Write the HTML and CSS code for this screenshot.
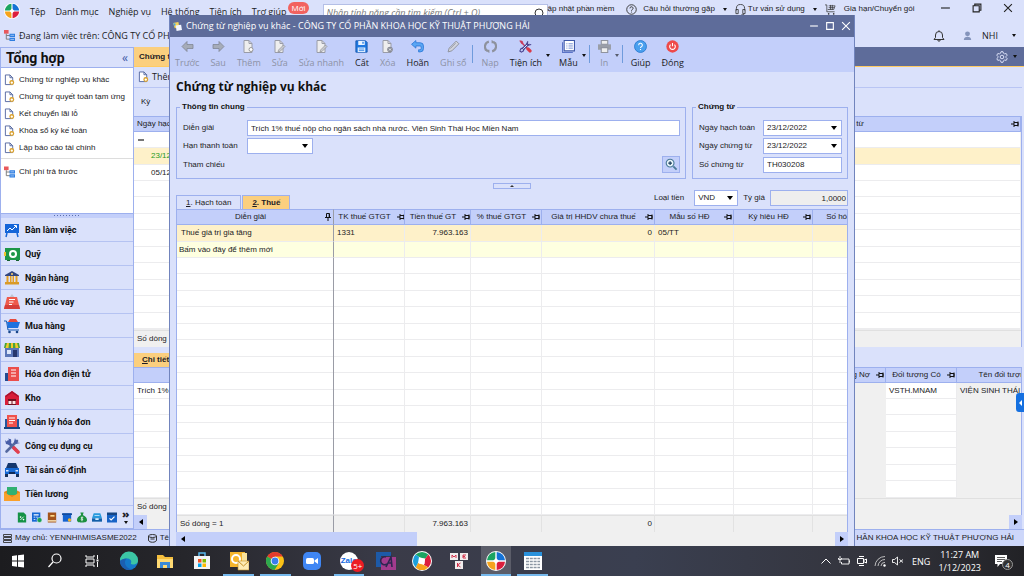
FILE: index.html
```html
<!DOCTYPE html>
<html lang="vi">
<head>
<meta charset="utf-8">
<title>Chứng từ nghiệp vụ khác</title>
<link rel="stylesheet" href="styles.css">
</head>
<body>
<svg class="defs" aria-hidden="true">
  <symbol id="pin" viewBox="0 0 8 8"><path d="M0 4h3M3 1v6M3 2.500h4v3H3M7 1.500v5" fill="none" stroke="#111" stroke-width="1"/></symbol>
  <symbol id="pin-down" viewBox="0 0 8 8"><path d="M2.500 0.500h3v4h-3zM1 4.500h6M4 5v3M5.200 1v3" fill="none" stroke="#111" stroke-width="1"/></symbol>
  <symbol id="doc" viewBox="0 0 12 12"><path d="M1.500 .5h5l3 3v7.500h-8z" fill="#fff" stroke="#51659f"/><path d="M6.500 .5v3h3" fill="none" stroke="#51659f"/><circle cx="8.500" cy="8.800" r="2" fill="#fff" stroke="#dca22c" stroke-width="1.400"/></symbol>
  <symbol id="tree" viewBox="0 0 12 12"><path d="M0 0h5v4H0z" fill="#e8585c"/><path d="M2.500 4v6h4M2.500 6h4" fill="none" stroke="#777" stroke-width="1"/><path d="M6 4h6v3.500H6zM6 8.500h6V12H6z" fill="#2f7ee0"/><path d="M7 5.800h4M7 10.300h4" stroke="#cfe2ff" stroke-width=".7"/></symbol>
  <symbol id="arrow" viewBox="0 0 13 12"><path d="M1 6l5-5v3h6v4H6v3z" fill="#a6acb8" stroke="#808694" stroke-width=".8"/></symbol>
  <symbol id="gdoc" viewBox="0 0 12 13"><path d="M1.500 .5h5l3 3v9h-8z" fill="#eee" stroke="#999ca8"/><path d="M6.500 .5v3h3" fill="none" stroke="#999ca8"/></symbol>
  <symbol id="tools" viewBox="0 0 16 16"><path d="M3 3l10 10" stroke="#485ea8" stroke-width="3"/><path d="M1 2l2 2 2-2-1-1.500 3 .8.300 3L5 6.800 2 6z" fill="#485ea8"/><path d="M13 3L2.500 13.500" stroke="#55699f" stroke-width="2.600" stroke-linecap="round"/><path d="M11 0l-1 4 2 2 4-1-2.500-.5-1-1z" fill="#485ea8"/><path d="M10 10l4 4" stroke="#e2404f" stroke-width="3.600" stroke-linecap="round"/></symbol>
  <symbol id="wheel" viewBox="0 0 20 20"><circle cx="10" cy="10" r="10" fill="#fff"/><path d="M9.300 9.300H1A9 9 0 0 1 9.300 1z" fill="#1ba462"/><path d="M10.700 9.300V1A9 9 0 0 1 19 9.300z" fill="#1472d6"/><path d="M10.700 10.700H19a9 9 0 0 1-8.300 8.300z" fill="#dc1f3d"/><path d="M9.300 10.700V19A9 9 0 0 1 1 10.700z" fill="#f6a31c"/><path d="M10 7l3 3-3 3-3-3z" fill="#fff"/></symbol>
</svg>

<div class="desktop">
  <div class="app">
    <header class="menubar">
      <svg class="logo" viewBox="0 0 20 20"><use href="#wheel"/></svg>
      <nav class="menu">
        <a href="#">Tệp</a><a href="#">Danh mục</a><a href="#">Nghiệp vụ</a><a href="#">Hệ thống</a><a href="#">Tiện ích</a><a href="#">Trợ giúp</a>
        <span class="new-badge">Mới</span>
      </nav>
      <div class="search">
        <input type="text" aria-label="Tìm kiếm" placeholder="Nhập tính năng cần tìm kiếm (Ctrl + Q)">
        <svg viewBox="0 0 10 10"><circle cx="5" cy="5" r="4" fill="none" stroke="#333"/></svg>
      </div>
      <div class="links">
        <a href="#" class="update">ập nhật phần mềm</a>
        <a href="#"><svg class="i11" viewBox="0 0 12 12"><circle cx="6" cy="6" r="5.200" fill="none" stroke="#333"/><path d="M4.300 4.800a1.700 1.700 0 1 1 2.500 1.400c-.6.300-.8.600-.8 1.200M6 8.300v1" fill="none" stroke="#333"/></svg>Câu hỏi thường gặp</a>
        <i class="caret"></i>
        <a href="#" class="advice"><svg class="i11" viewBox="0 0 12 12"><path d="M1.500 7V5a4.500 4.500 0 0 1 9 0v2M1 6h2.500v4.500H1zM8.500 6H11v4.500H8.500zM10 10.500c0 1-1 1.200-3 1.200" fill="none" stroke="#333" stroke-width=".9"/></svg>Tư vấn sử dụng</a>
        <i class="caret"></i>
        <a href="#" class="renew"><svg class="i11" viewBox="0 0 12 12"><path d="M0 1h2v7.500h8.500M4 2h7L9.500 6H3M4 4h6M6 1v5M8 1v5" fill="none" stroke="#333" stroke-width=".8"/><circle cx="4" cy="10.800" r=".9" fill="#333"/><circle cx="9.500" cy="10.800" r=".9" fill="#333"/></svg>Gia hạn/Chuyển gói</a>
      </div>
      <div class="winbtns">
        <button aria-label="Thu nhỏ"><svg viewBox="0 0 9 9"><path d="M0 4.500h8" stroke="#222"/></svg></button>
        <button aria-label="Khôi phục"><svg viewBox="0 0 9 9"><path d="M1 2.500h5.500V8H1zM2.500 2.500V1h5.500v5.500H6.500" fill="none" stroke="#222"/></svg></button>
        <button aria-label="Đóng"><svg viewBox="0 0 9 9"><path d="M1 1l7 7M8 1L1 8" stroke="#222"/></svg></button>
      </div>
    </header>
    <div class="companybar">
      <svg class="i11" viewBox="0 0 12 12"><use href="#tree"/></svg>
      <span>Đang làm việc trên: CÔNG TY CỔ PHẦN</span>
      <div class="user">
        <svg class="bell" viewBox="0 0 12 12"><path d="M1 9.500h10L9.500 7.500V5a3.500 3.500 0 0 0-7 0v2.500zM6 .3v1M4.800 10a1.200 1.200 0 0 0 2.400 0" fill="none" stroke="#333"/></svg>
        <svg class="i9" viewBox="0 0 9 11"><circle cx="4.500" cy="3.500" r="3" fill="#8494bb"/><path d="M0 11c0-3 2-4 4.500-4S9 8 9 11z" fill="#8494bb"/></svg>
        <span>NHI</span><i class="caret"></i>
      </div>
    </div>

    <div class="workspace">
      <aside class="sidebar">
        <div class="side-title"><h2>Tổng hợp</h2><button aria-label="Thu gọn">«</button></div>
        <ul class="side-list">
          <li><a href="#"><svg class="i13"><use href="#doc"/></svg>Chứng từ nghiệp vụ khác</a></li>
          <li><a href="#"><svg class="i13"><use href="#doc"/></svg>Chứng từ quyết toán tạm ứng</a></li>
          <li><a href="#"><svg class="i13"><use href="#doc"/></svg>Kết chuyển lãi lỗ</a></li>
          <li><a href="#"><svg class="i13"><use href="#doc"/></svg>Khóa sổ kỳ kế toán</a></li>
          <li><a href="#"><svg class="i13"><use href="#doc"/></svg>Lập báo cáo tài chính</a></li>
          <li class="split"><a href="#"><svg class="i13"><use href="#tree"/></svg>Chi phí trả trước</a></li>
        </ul>
        <div class="splitter"><span></span></div>
        <nav class="modules">
          <a href="#"><svg viewBox="0 0 16 16"><path d="M1 2h14v9H1z" fill="#1565d8"/><path d="M3 11l-1 4M13 11l1 4" stroke="#1565d8" stroke-width="1.500"/><path d="M3 9l3-3 2 2 4-4M10 3.500h2.500V6" fill="none" stroke="#fff"/></svg>Bàn làm việc</a>
          <a href="#"><svg viewBox="0 0 16 16"><path d="M1 2h15v12H1z" fill="#1d9648"/><path d="M0 6h2v4H0z" fill="#f2c52e"/><circle cx="9" cy="8" r="3" fill="none" stroke="#fff" stroke-width="2"/><path d="M3 14h3v1H3zM12 14h3v1h-3z" fill="#145f30"/></svg>Quỹ</a>
          <a href="#"><svg viewBox="0 0 16 16"><path d="M8 1l7 4v1H1V5z" fill="#33467f"/><path d="M2.500 6h2v6h-2zM6 6h1.500v6H6zM8.500 6H10v6H8.500zM11.500 6h2v6h-2z" fill="#e5a024"/><path d="M1 12h14v2.500H1z" fill="#d99a28"/><circle cx="8" cy="4" r="1" fill="#ffd36c"/></svg>Ngân hàng</a>
          <a href="#"><svg viewBox="0 0 16 16"><path d="M8 0l3 4H5z" fill="#bfc4d0"/><path d="M3 3h10l3 12H0z" fill="#ee5a4c"/><path d="M1 11h14l1 4H0z" fill="#d53e39"/><path d="M5 5.500h6M5 8h4.500M5 10.500h3" stroke="#fff" stroke-width="1.200"/></svg>Khế ước vay</a>
          <a href="#"><svg viewBox="0 0 16 16"><path d="M4 4l2-3h6l2 3z" fill="#e54b3e"/><path d="M0 3h2.500L4 12h11" fill="none" stroke="#1558b0"/><path d="M3 4h13l-2 6H4z" fill="#1d72df"/><circle cx="5.500" cy="14" r="1.300" fill="#184589"/><circle cx="13" cy="14" r="1.300" fill="#184589"/></svg>Mua hàng</a>
          <a href="#"><svg viewBox="0 0 16 16"><path d="M1 5h14v10H1z" fill="#5b76b8"/><path d="M9 8h4v7H9z" fill="#27366b"/><path d="M3 8h4v4H3z" fill="#dce6fa"/><path d="M1 1h14l1 5H0z" fill="#46a33c"/><path d="M3 1h2l-.5 5h-3zM7 1h2v5H7zM11 1h2l1.500 5h-3z" fill="#f4c92e"/></svg>Bán hàng</a>
          <a href="#"><svg viewBox="0 0 16 16"><path d="M1 7h6v8H1z" fill="#234b91"/><path d="M4 1h11v14H4z" fill="#eb4e4b"/><path d="M7 4h5M7 7h5M7 10h5" stroke="#fff"/></svg>Hóa đơn điện tử</a>
          <a href="#"><svg viewBox="0 0 16 16"><path d="M1 6l7-5 7 5v9H1z" fill="#d81e39"/><path d="M1 6l7-5 7 5-1 1-6-4-6 4z" fill="#a9132e"/><path d="M4 9h8v6H4z" fill="#6d1322"/><path d="M4.500 11h3v3h-3zM8.500 11h3v3h-3z" fill="#ffe7e7"/></svg>Kho</a>
          <a href="#"><svg viewBox="0 0 16 16"><path d="M1 5h14v9H1z" fill="#24569e"/><path d="M3 1h10v12H3z" fill="#ef514b"/><path d="M5 4h6M5 6.500h6M5 9h4" stroke="#fff"/><path d="M0 13h16v2H0z" fill="#17437f"/></svg>Quản lý hóa đơn</a>
          <a href="#"><svg viewBox="0 0 16 16"><use href="#tools"/></svg>Công cụ dụng cụ</a>
          <a href="#"><svg viewBox="0 0 16 16"><path d="M4 1h8l2 5H2z" fill="#15376e"/><path d="M1 6h14v6H1z" fill="#1668d3"/><path d="M1 12h3v3H1zM12 12h3v3h-3z" fill="#17315b"/><path d="M5 10h6v2H5z" fill="#0d2a58"/><path d="M2 8h2.500v1.500H2zM11.500 8H14v1.500h-2.500z" fill="#dbe8ff"/></svg>Tài sản cố định</a>
          <a href="#"><svg viewBox="0 0 16 16"><path d="M0 6l8-4 8 4v9H0z" fill="#e0861c"/><path d="M3 1h10v8H3z" fill="#32b172"/><path d="M0 6l8 5 8-5v9H0z" fill="#f9a02b"/></svg>Tiền lương</a>
        </nav>
        <div class="quick">
          <svg viewBox="0 0 12 12"><path d="M1 0h7l3 3v9H1z" fill="#159247"/><path d="M4 9l4-4" stroke="#fff"/><circle cx="4.300" cy="5.500" r="1" fill="#fff"/><circle cx="7.800" cy="8.500" r="1" fill="#fff"/></svg>
          <svg viewBox="0 0 12 12"><path d="M0 0h10v11H0z" fill="#1668d3"/><path d="M2 2h6v1.500H2zM2 5h2v1H2zM5 5h2v1H5zM2 8h2v1H2z" fill="#fff"/><circle cx="9" cy="9" r="3" fill="#18a058" stroke="#fff" stroke-width=".6"/></svg>
          <svg viewBox="0 0 12 12"><path d="M1 0h10v12H1z" fill="#a4541b"/><path d="M4 3h5v2H4z" fill="#ffd98a"/><path d="M1 9h10v2H1z" fill="#ecd0a3"/></svg>
          <svg viewBox="0 0 12 12"><path d="M1 1h10v10H1z" fill="#1462cf"/><path d="M0 1h12v2H0z" fill="#124a9c"/><circle cx="9" cy="9" r="2" fill="#f6b325"/></svg>
          <svg viewBox="0 0 12 12"><path d="M4 0h4L7 3c4 2 5 4 5 6s-1 3-6 3-6-1-6-3 1-4 5-6z" fill="#1b8f3f"/><path d="M7.500 6c-3-1-3 1-1.500 1.500s1 2-1.500 1M6 5v5.500" fill="none" stroke="#fff" stroke-width=".9"/></svg>
          <svg viewBox="0 0 12 12"><path d="M2 1h8l2 6H0z" fill="#2899dd"/><path d="M0 7h12v4H0z" fill="#125ea8"/><path d="M4 7h4v2H4zM3 3h6v1H3z" fill="#d6efff"/></svg>
          <svg viewBox="0 0 12 12"><path d="M0 1h12v11H0z" fill="#1763c6"/><path d="M0 0h12v3H0z" fill="#174683"/><path d="M3 7l2 2 4-4" fill="none" stroke="#fff" stroke-width="1.400"/></svg>
          <button aria-label="Thêm phân hệ"><b>»</b><i class="caret"></i></button>
        </div>
      </aside>

      <main class="pane">
        <div class="tabstrip">
          <button class="doc-tab">Chứng từ nghiệp vụ khác</button>
          <span class="gear"><svg viewBox="0 0 12 12"><path d="M5 .7h2l.4 1.500 1.300.7 1.500-.4 1 1.700L10 5.500v1l1.200 1.200-1 1.700-1.500-.4-1.300.8L7 11.300H5l-.4-1.500L3.300 9l-1.500.4-1-1.700L2 6.500v-1L.8 4.200l1-1.700 1.500.4 1.300-.7z" fill="none" stroke="#e5eaff" stroke-width=".9"/><circle cx="6" cy="6" r="1.800" fill="none" stroke="#e5eaff" stroke-width=".9"/></svg><i class="caret"></i></span>
        </div>
        <div class="pane-tools"><button><svg class="i13"><use href="#doc"/></svg>Thêm</button></div>
        <div class="pane-filter">Kỳ</div>
        <div class="grid-box upper">
          <table class="grid">
            <colgroup><col class="w-first"><col><col class="w-kind"></colgroup>
            <thead><tr><th class="start">Ngày hạch toán</th><th></th><th><span class="th">Loại chứng từ<svg><use href="#pin"/></svg></span></th></tr></thead>
            <tbody>
              <tr><td class="eq"><b></b></td><td></td><td></td></tr>
              <tr class="sel"><td class="date green">23/12/2022</td><td></td><td></td></tr>
              <tr><td class="date">05/12/2022</td><td></td><td></td></tr>
              <tr class="filler"><td></td><td></td><td></td></tr>
            </tbody>
            <tfoot><tr><td>Số dòng</td><td></td><td></td></tr></tfoot>
          </table>
        </div>
        <div class="detail-tabs"><button><u>C</u>hi tiết</button></div>
        <div class="grid-box lower">
          <table class="grid">
            <colgroup><col><col class="w71"><col class="w71"><col class="w-name"></colgroup>
            <thead><tr><th></th><th><span class="th">Đối tượng Nợ<svg><use href="#pin"/></svg></span></th><th><span class="th">Đối tượng Có<svg><use href="#pin"/></svg></span></th><th><span class="th">Tên đối tượng Có<svg><use href="#pin"/></svg></span></th></tr></thead>
            <tbody>
              <tr><td>Trích 1%</td><td class="ro"></td><td>VSTH.MNAM</td><td class="ro">VIỆN SINH THÁI</td></tr>
              <tr class="filler"><td></td><td class="ro"></td><td></td><td class="ro"></td></tr>
            </tbody>
            <tfoot><tr><td>Số dòng</td><td></td><td></td><td></td></tr></tfoot>
          </table>
        </div>
        <div class="hscroll"><button class="left" aria-label="Cuộn trái"></button><button class="right" aria-label="Cuộn phải"></button></div>
        <button class="drawer" aria-label="Mở khung bên"></button>
      </main>
    </div>

    <footer class="statusbar">
      <svg class="i9" viewBox="0 0 9 9"><path d="M.5.500h8v2h-8zM.5 3.500h8v2h-8zM.5 6.500h8v2h-8z" fill="none" stroke="#333" stroke-width=".9"/></svg>
      <span>Máy chủ: YENNHI\MISASME2022</span>
      <svg class="i9 db" viewBox="0 0 9 9"><ellipse cx="4.500" cy="2" rx="4" ry="1.500" fill="none" stroke="#333"/><path d="M.5 2v4c0 3 8 3 8 0V2M2.500 5h4" fill="none" stroke="#333"/></svg>
      <span>Tê</span>
      <span class="company">HẦN KHOA HỌC KỸ THUẬT PHƯỢNG HẢI</span>
    </footer>
  </div>

  <section class="dialog" role="dialog" aria-label="Chứng từ nghiệp vụ khác">
    <header class="titlebar">
      <svg viewBox="0 0 10 10"><path d="M0 1l6-1 1 6-5 1z" fill="#f6d55a"/><path d="M3 4l6-1 1 6-6 1z" fill="#f2f6ff"/><path d="M0 1l3 1-1 3z" fill="#44a4e8"/></svg>
      <h1>Chứng từ nghiệp vụ khác - CÔNG TY CỔ PHẦN KHOA HỌC KỸ THUẬT PHƯỢNG HẢI</h1>
      <div class="winctl">
        <button aria-label="Thu nhỏ"><svg viewBox="0 0 9 9"><path d="M1 4.500h7" stroke="#fff"/></svg></button>
        <button aria-label="Phóng to"><svg viewBox="0 0 9 9"><path d="M1.500 1.500h6v6h-6z" fill="none" stroke="#fff"/></svg></button>
        <button aria-label="Đóng"><svg viewBox="0 0 9 9"><path d="M1 1l7 7M8 1L1 8" stroke="#fff"/></svg></button>
      </div>
    </header>
    <div class="toolbar">
      <button class="tool" disabled><svg viewBox="0 0 13 12"><use href="#arrow"/></svg>Trước</button>
      <button class="tool" disabled><svg class="flip" viewBox="0 0 13 12"><use href="#arrow"/></svg>Sau</button>
      <button class="tool" disabled><svg viewBox="0 0 12 13"><use href="#gdoc"/><circle cx="8.500" cy="9.500" r="2" fill="#fff" stroke="#999"/></svg>Thêm</button>
      <button class="tool" disabled><svg viewBox="0 0 12 13"><use href="#gdoc"/><path d="M5 10l5-5 1.500 1.500-5 5-2 .5z" fill="#c8cad2" stroke="#888" stroke-width=".6"/></svg>Sửa</button>
      <button class="tool" disabled><svg viewBox="0 0 12 13"><use href="#gdoc"/><path d="M5 10l5-5 1.500 1.500-5 5-2 .5z" fill="#c8cad2" stroke="#888" stroke-width=".6"/></svg>Sửa nhanh</button>
      <button class="tool"><svg viewBox="0 0 12 12"><path d="M.8.800h9l1.400 1.400v9H.8z" fill="#1f78e0" stroke="#1657ac" stroke-width=".8"/><path d="M3 1h6v3.500H3zM2.500 7h7v4h-7z" fill="#e9f3ff"/><path d="M6.800 1.500h1.200v2H6.800z" fill="#1f78e0"/><path d="M3.500 8.300h5M3.500 9.800h5" stroke="#1f78e0" stroke-width=".7"/></svg>Cất</button>
      <button class="tool" disabled><svg viewBox="0 0 12 13"><use href="#gdoc"/><circle cx="8.500" cy="9.500" r="2.800" fill="#888c96"/><path d="M7.500 8.500l2 2M9.500 8.500l-2 2" stroke="#fff" stroke-width=".8"/></svg>Xóa</button>
      <button class="tool"><svg viewBox="0 0 12 12"><path d="M.5 4L4.500.5v2h4a3 3 0 0 1 3 3V8a3 3 0 0 1-3 3H7V9h1.200A1.200 1.200 0 0 0 9.400 7.800V6.500a1 1 0 0 0-1-1H4.500v2z" fill="#5aa6f4" stroke="#2572d4" stroke-width=".7"/></svg>Hoãn</button>
      <button class="tool" disabled><svg viewBox="0 0 12 12"><path d="M1 11l1-3.500L8.500 1 11 3.500 4.500 10z" fill="#d0d3dc" stroke="#8f939e" stroke-width=".9"/><path d="M3 8l5-5" stroke="#8f939e" stroke-width=".7"/></svg>Ghi sổ</button>
      <span class="sep"></span>
      <button class="tool" disabled><svg viewBox="0 0 12 12"><path d="M4.500 1.500A4.700 4.700 0 0 0 3 10M7.500 10.500A4.700 4.700 0 0 0 9 2" fill="none" stroke="#8e929d" stroke-width="2"/><path d="M0 9h5v3zM12 3H7V0z" fill="#8e929d"/></svg>Nạp</button>
      <button class="tool"><svg viewBox="0 0 16 16"><path d="M3 3l8 8" stroke="#c93658" stroke-width="1.600"/><path d="M1 1l3 .5 1 3-2-.5z" fill="#c93658" stroke="#c93658"/><path d="M12 4L4 12" stroke="#4a4490" stroke-width="3.400"/><path d="M12 4L4 12" stroke="#e8eafc" stroke-width="1.200"/><path d="M11 1.500l-1.500 3 2 2 3.500-1M5 10l-2.500.5-1.500 3 2 1.500 2.500-1.500L6 11" fill="none" stroke="#4a4490" stroke-width="1.300"/><path d="M11 11l2.500 2.500" stroke="#d93a49" stroke-width="4" stroke-linecap="round"/></svg>Tiện ích</button>
      <i class="caret low"></i>
      <button class="tool"><svg viewBox="0 0 12 12"><path d="M.5 2v9.500H10" fill="none" stroke="#5b74c8"/><path d="M2 .5h9.500V10H2z" fill="#fff" stroke="#3f59a8"/><path d="M4 3.500h1M6 3.500h4M4 5.500h1M6 5.500h4M4 7.500h1M6 7.500h4" stroke="#6380ce" stroke-width=".8"/></svg>Mẫu</button>
      <i class="caret low"></i>
      <span class="sep tight"></span>
      <button class="tool" disabled><svg viewBox="0 0 12 12"><path d="M3 .5h6V4H3z" fill="#eee" stroke="#8f939e"/><path d="M0 4h12v5H0z" fill="#9a9ea8"/><path d="M3 7h6v4.500H3z" fill="#eee" stroke="#8f939e"/></svg>In</button>
      <i class="caret low dim"></i>
      <span class="sep tight"></span>
      <button class="tool"><svg viewBox="0 0 12 12"><circle cx="6" cy="6" r="5.500" fill="#4aa0ee" stroke="#2878cf" stroke-width=".8"/><path d="M4.300 4.800a1.700 1.700 0 1 1 2.500 1.400c-.6.300-.8.600-.8 1.200M6 8.300v1" fill="none" stroke="#fff"/></svg>Giúp</button>
      <button class="tool"><svg viewBox="0 0 12 12"><circle cx="6" cy="6" r="5.700" fill="#ee4a4a"/><path d="M4.200 4.200a2.600 2.600 0 1 0 3.600 0M6 2.800v3" fill="none" stroke="#fff"/></svg>Đóng</button>
    </div>

    <div class="dialog-body">
      <h2 class="voucher-title">Chứng từ nghiệp vụ khác</h2>
      <div class="groups">
        <fieldset class="general">
          <legend>Thông tin chung</legend>
          <label for="desc">Diễn giải</label><input id="desc" type="text" value="Trích 1% thuế nộp cho ngân sách nhà nước. Viện Sinh Thái Học Miền Nam">
          <label for="term">Hạn thanh toán</label><select id="term"><option></option></select>
          <span>Tham chiếu</span><button class="lookup" aria-label="Tìm tham chiếu"><svg viewBox="0 0 14 14"><circle cx="5.500" cy="5.500" r="4.200" fill="#eaf6fb" stroke="#4a7a98" stroke-width="1.200"/><path d="M3.500 5.500h4M5.500 3.500v4" stroke="#173a5a" stroke-width="1.300"/><path d="M9 9l3.500 3.500" stroke="#4a7a98" stroke-width="2"/></svg></button>
        </fieldset>
        <fieldset class="voucher">
          <legend>Chứng từ</legend>
          <label for="d1">Ngày hạch toán</label><select id="d1"><option>23/12/2022</option></select>
          <label for="d2">Ngày chứng từ</label><select id="d2"><option>23/12/2022</option></select>
          <label for="no">Số chứng từ</label><input id="no" type="text" value="TH030208">
        </fieldset>
      </div>
      <button class="collapse" aria-label="Thu gọn"></button>
      <div class="tab-row">
        <div class="tabs"><button><u>1</u>. Hạch toán</button><button class="on"><u>2</u>. Thuế</button></div>
        <div class="currency">
          <label for="cur">Loại tiền</label><select id="cur"><option>VND</option></select>
          <label for="rate">Tỷ giá</label><input id="rate" type="text" value="1,0000" readonly>
        </div>
      </div>
      <div class="grid-box entry">
        <table class="grid">
          <colgroup><col class="c1"><col class="c2"><col class="c3"><col class="c2"><col class="c5"><col class="c6"><col class="c6"><col class="c8"></colgroup>
          <thead><tr>
            <th><span class="th">Diễn giải<svg><use href="#pin-down"/></svg></span></th>
            <th><span class="th">TK thuế GTGT<svg><use href="#pin"/></svg></span></th>
            <th><span class="th">Tiền thuế GT<svg><use href="#pin"/></svg></span></th>
            <th><span class="th">% thuế GTGT<svg><use href="#pin"/></svg></span></th>
            <th><span class="th">Giá trị HHDV chưa thuế<svg><use href="#pin"/></svg></span></th>
            <th><span class="th">Mẫu số HĐ<svg><use href="#pin"/></svg></span></th>
            <th><span class="th">Ký hiệu HĐ<svg><use href="#pin"/></svg></span></th>
            <th><span class="th">Số hóa đơn<svg><use href="#pin"/></svg></span></th>
          </tr></thead>
          <tbody>
            <tr class="sel"><td>Thuế giá trị gia tăng</td><td>1331</td><td class="num">7.963.163</td><td></td><td class="num">0</td><td>05/TT</td><td></td><td></td></tr>
            <tr class="new"><td>Bấm vào đây để thêm mới</td><td></td><td></td><td></td><td></td><td></td><td></td><td></td></tr>
            <tr class="filler"><td></td><td></td><td></td><td></td><td></td><td></td><td></td><td></td></tr>
          </tbody>
          <tfoot><tr><td>Số dòng = 1</td><td></td><td class="num">7.963.163</td><td></td><td class="num">0</td><td></td><td></td><td></td></tr></tfoot>
        </table>
      </div>
      <div class="hscroll wide"><button class="left" aria-label="Cuộn trái"></button><span class="thumb"></span><button class="right" aria-label="Cuộn phải"></button></div>
    </div>
  </section>
</div>

<footer class="taskbar">
  <div class="apps">
    <button aria-label="Start"><svg viewBox="0 0 20 20"><path d="M4 5l5-.7V9.500H4zM10 4.200L16 3.400V9.500h-6zM4 10.500h5v5.200L4 15zM10 10.500h6v6.100l-6-.8z" fill="#fff"/></svg></button>
    <button aria-label="Tìm kiếm"><svg viewBox="0 0 20 20"><circle cx="11.500" cy="7.500" r="4.500" fill="none" stroke="#fff" stroke-width="1.200"/><path d="M8 11l-4.500 5" stroke="#fff" stroke-width="1.200"/></svg></button>
    <button aria-label="Task view"><svg viewBox="0 0 20 20"><path d="M4 4v2h8V4M4 8h8v4H4zM4 16v-2h8v2M15.500 4v4M15.500 11v5" fill="none" stroke="#fff"/><path d="M14.500 8.500h2v2h-2z" fill="#fff"/></svg></button>
    <button aria-label="Edge"><svg viewBox="0 0 20 20"><circle cx="10" cy="10" r="9" fill="#1479c9"/><path d="M1 10a9 9 0 0 1 18-1c.3 3-2 4.500-5 4.500-2 0-2.500-.8-2-1.500 1-2-.5-4.500-4-4.500C4.500 7.500 2 9 1 10z" fill="#3cc6a4"/><path d="M1 10c1-1.500 3.500-2.500 7-2.500-3 2-3 7 2 10 2 1.200 4 .5 5 0A9 9 0 0 1 1 10z" fill="#1b5fb0"/></svg></button>
    <button aria-label="Explorer"><svg viewBox="0 0 20 20"><path d="M2 4h6l2 2h8v11H2z" fill="#f5bf3e"/><path d="M2 8h16v9H2z" fill="#ffda73"/><path d="M5 17v-6h10v6h-3v-3H8v3z" fill="#3a8ad6"/></svg></button>
    <button aria-label="Store"><svg viewBox="0 0 20 20"><path d="M7 5V2h6v3" fill="none" stroke="#58b7ec" stroke-width="1.500"/><path d="M2 5h16v13H2z" fill="#f4f4f4"/><path d="M6 8h3.500v3.500H6z" fill="#f25022"/><path d="M10.500 8H14v3.500h-3.500z" fill="#7fba00"/><path d="M6 12.500h3.500V16H6z" fill="#00a4ef"/><path d="M10.500 12.500H14V16h-3.500z" fill="#ffb900"/></svg></button>
    <button class="open" aria-label="Outlook"><svg viewBox="0 0 20 20"><path d="M1 1h15v15H1z" fill="#f5b52c"/><circle cx="7" cy="8" r="4" fill="none" stroke="#fff" stroke-width="2"/><path d="M13 2h5v8h-5z" fill="#fae39b"/><path d="M9 10h11v9H9z" fill="#fdecb5" stroke="#c4912a" stroke-width=".6"/><path d="M9 10l5.500 5 5.500-5" fill="none" stroke="#c4912a"/></svg></button>
    <button class="open" aria-label="Chrome"><svg viewBox="0 0 20 20"><circle cx="10" cy="10" r="9" fill="#fbc116"/><path d="M10 10L2.200 5.500A9 9 0 0 1 17.800 5.500H10z" fill="#e33b2e"/><path d="M10 10L2.200 5.500A9 9 0 0 0 9.500 19L14 12z" fill="#2da94f"/><circle cx="10" cy="10" r="4.300" fill="#fff"/><circle cx="10" cy="10" r="3.400" fill="#3b7ded"/></svg></button>
    <button aria-label="Zoom"><svg viewBox="0 0 20 20"><rect x="1" y="1" width="18" height="18" rx="5" fill="#3f86f4"/><rect x="4" y="7" width="8" height="6" rx="1.500" fill="#fff"/><path d="M12.500 9.500L16 7v6l-3.500-2.500z" fill="#fff"/></svg></button>
    <button class="open zalo" aria-label="Zalo"><span class="bubble">Zalo</span><span class="count">5+</span></button>
    <button aria-label="CA"><svg viewBox="0 0 20 20"><path d="M0 1h15v4H5v11H0z" fill="#1d5aa8"/><path d="M5 6h15v13H5z" fill="#a23b8d"/><path d="M10 6a4 4 0 1 0 1 7M10 16l5-10 1 10M12 12h4" fill="none" stroke="#2e2650" stroke-width="1.600"/></svg></button>
    <button aria-label="AMIS"><svg viewBox="0 0 20 20"><circle cx="10" cy="10" r="10" fill="#fff"/><path d="M3.600 3.600A9 9 0 0 1 16.400 3.600L13 8 7 6z" fill="#1ba462"/><path d="M16.400 3.600a9 9 0 0 1 0 12.800L12 14l1-6z" fill="#dc1f3d"/><path d="M16.400 16.400a9 9 0 0 1-12.800 0L6 12l6 2z" fill="#f6a31c"/><path d="M3.600 16.400a9 9 0 0 1 0-12.800L7 6l-1 6z" fill="#1ca0dc"/><path d="M7 7l6 .5-.5 5.500L7 12.500z" fill="#fff"/></svg></button>
    <button aria-label="MEK"><svg viewBox="0 0 20 20"><path d="M1 2h8v7H1zM11 2h8v7h-8zM6 10h8v8H6z" fill="#f0eded"/><path d="M3 7V4l2 2 2-2v3M17 4h-3v3h3M14 5.500h2M8.500 12v4M11.500 12l-3 2 3 2" fill="none" stroke="#d2304a"/></svg></button>
    <button class="open active" aria-label="MISA"><svg viewBox="0 0 20 20"><use href="#wheel"/></svg></button>
    <button class="open" aria-label="Bảng tính"><svg viewBox="0 0 20 20"><path d="M1 1h18v18H1z" fill="#fff"/><path d="M1 1h18v4H1z" fill="#2a92dc"/><path d="M3 7.500h14M3 10.500h14M3 13.500h14M3 16.500h14" stroke="#8b96a3" stroke-width="1.600" stroke-dasharray="3 .8"/></svg></button>
  </div>
  <div class="tray">
    <svg viewBox="0 0 12 12"><path d="M1.500 8.500L6 4l4.500 4.500" fill="none" stroke="#fff"/></svg>
    <svg viewBox="0 0 12 12"><path d="M4 4h7v5H3.500V7M11.500 5.500v2M2 1v3M.5 3v1.500h3V3M2 4.500V8" fill="none" stroke="#fff" stroke-width=".9"/></svg>
    <svg viewBox="0 0 12 12"><path d="M1.500 3.500h6v5h-6zM7.500 5.500l3-1.500v4l-3-1.500M3 1.500h5M3 10.500h5" fill="none" stroke="#fff"/></svg>
    <svg viewBox="0 0 12 12"><path d="M1 11A10 10 0 0 1 11 1.500M4 11a7 7 0 0 1 7-6.500M7 11a4 4 0 0 1 4-3.700" fill="none" stroke="#ccc" stroke-width=".9"/><circle cx="10.500" cy="10.500" r="1.200" fill="#fff"/></svg>
    <svg viewBox="0 0 12 12"><path d="M.5 4.500h2L5.500 2v8L2.500 7.500h-2zM7.500 4.500l3.500 3M11 4.500l-3.500 3" fill="none" stroke="#fff" stroke-width=".9"/></svg>
    <span class="lang">ENG</span>
    <span class="clock">11:27 AM<br>1/12/2023</span>
    <span class="notice"><svg viewBox="0 0 12 12"><path d="M0 0h12v9H5l-2.500 3V9H0z" fill="#fff"/><path d="M2 2.500h8M2 4.500h8M2 6.500h5" stroke="#333" stroke-width=".8"/></svg><b>4</b></span>
  </div>
</footer>
</body>
</html>
```
FILE: styles.css
```css
:root {
  --sans: "Liberation Sans", Arial, sans-serif;
  --ui: "Open Sans", "Noto Sans", sans-serif;
  --bg: #dae1fb;
  --head: #c3cffa;
  --line: #9db0ee;
  --navy: #5e6c9a;
  --orange: #fbcf7e;
  --arrow: url("data:image/svg+xml,%3Csvg xmlns='http://www.w3.org/2000/svg' width='6' height='4'%3E%3Cpath d='M0 0h6L3 4z'/%3E%3C/svg%3E");
}
* { box-sizing: border-box; }
body {
  margin: 0;
  height: 100vh;
  display: flex;
  flex-direction: column;
  overflow: hidden;
  font: 8px/12px var(--sans);
  color: #1b1b24;
  background: var(--bg);
}
button { font: inherit; color: inherit; border: 0; padding: 0; margin: 0; background: none; }
a { color: inherit; text-decoration: none; }
svg { flex: none; display: block; }
h1, h2, ul { margin: 0; padding: 0; list-style: none; }
.defs { position: absolute; width: 0; height: 0; }
.i9 { width: 9px; height: 9px; }
.i11 { width: 11px; height: 11px; }
.i13 { width: 11px; height: 12px; }
.caret { width: 0; height: 0; flex: none; border: 2px solid transparent; border-top: 3px solid #111; border-bottom: 0; }

.desktop { flex: 1; min-height: 0; position: relative; }
.app { height: 100%; display: flex; flex-direction: column; }

/* top menu */
.menubar { height: 24px; display: flex; align-items: flex-start; padding-left: 4px; }
.logo { width: 16px; height: 16px; margin-top: 3px; }
.menu { display: flex; gap: 10px; margin: 6px 0 0 10px; font: 9px/12px var(--ui); white-space: nowrap; }
.new-badge { margin: -4px 0 0 -8px; padding: 0 3px; height: 12px; line-height: 12px; border-radius: 6px; background: #f2625f; color: #fff; font-size: 8px; }
.search { width: 225px; height: 18px; margin: 4px 0 0 14px; display: flex; align-items: center; background: #fff; border: 1px solid #b4bfe6; padding: 0 3px; }
.search input { flex: 1; min-width: 0; border: 0; outline: 0; padding: 0; background: none; font: italic 9px/12px var(--ui); }
.search input::placeholder { color: #777; }
.search svg { width: 10px; height: 10px; }
.links { display: flex; align-items: center; gap: 8px; height: 18px; white-space: nowrap; }
.links a { display: flex; align-items: center; gap: 6px; }
.links .update { margin-right: 4px; }
.links .advice { gap: 2px; }
.links .renew { gap: 8px; }
.winbtns { margin-left: auto; display: flex; gap: 21px; padding: 3px 11px 0 0; }
.winbtns svg { width: 10px; height: 10px; }

.companybar { height: 23px; display: flex; align-items: center; gap: 4px; padding: 0 8px 0 4px; font: 9px/12px var(--ui); }
.user { margin-left: auto; display: flex; align-items: center; gap: 14px; }
.user span { margin-left: -4px; }
.bell { width: 12px; height: 12px; margin-right: 4px; }

.workspace { flex: 1; min-height: 0; display: flex; }

/* sidebar */
.sidebar { width: 134px; display: flex; flex-direction: column; border: 1px solid var(--line); }
.side-title { height: 20px; display: flex; align-items: center; justify-content: space-between; padding: 0 5px; border-bottom: 1px solid var(--line); }
.side-title h2 { font: bold 14px/18px Roboto, sans-serif; color: #111; }
.side-title button { font: 12px/14px var(--ui); color: #3f5aa8; }
.side-list { flex: 1; min-height: 0; background: #fff; padding-top: 3px; }
.side-list a { height: 17px; display: flex; align-items: center; gap: 4px; padding-left: 3px; white-space: nowrap; }
.side-list .split { border-top: 1px solid #ddd; margin-top: 2px; padding-top: 4px; }
.splitter { height: 5px; background: var(--head); border-top: 1px solid var(--line); display: flex; justify-content: center; padding-top: 1px; }
.splitter span { width: 26px; height: 1px; background: repeating-linear-gradient(90deg, #5b6eae 0 1px, transparent 1px 3px); }
.modules a { height: 24px; display: flex; align-items: center; gap: 5px; padding-left: 3px; border-bottom: 1px solid #b5c3f2; font: bold 9px/12px Roboto, sans-serif; color: #111; }
.modules svg { width: 16px; height: 16px; }
.quick { height: 22px; display: flex; align-items: center; gap: 5px; padding-left: 16px; }
.quick svg { width: 10px; height: 11px; }
.quick button { font: bold 11px/8px var(--ui); display: grid; gap: 3px; justify-items: center; }

/* background document */
.pane { flex: 1; min-width: 0; position: relative; display: flex; flex-direction: column; padding-right: 2px; }
.tabstrip { height: 20px; margin-right: -2px; display: flex; justify-content: space-between; background: var(--navy); border-bottom: 1px solid #ffcb62; }
.doc-tab { background: var(--orange); font-weight: bold; padding: 0 5px; }
.gear { display: flex; align-items: center; gap: 5px; padding-right: 7px; }
.gear svg { width: 12px; height: 12px; }
.pane-tools { height: 21px; display: flex; align-items: center; padding-left: 4px; border-bottom: 1px solid #b9c5f4; }
.pane-tools button { display: flex; align-items: center; gap: 3px; font: 9px/12px var(--ui); }
.pane-filter { height: 28px; padding: 8px 7px; }
.upper { height: 231px; flex: none; border-right: 1px solid var(--line); }
.detail-tabs { height: 20px; padding-top: 6px; }
.detail-tabs button { height: 14px; padding: 0 8px; background: var(--orange); font-weight: bold; }
.lower { flex: 1; border-right: 1px solid var(--line); }
.w-first { width: 90px; }
.w-kind { width: 354px; }
.w71 { width: 71px; }
.w-name { width: 116px; }
.lower .grid { width: calc(100% + 52px); }
.drawer { position: absolute; right: 0; top: 346px; width: 8px; height: 19px; border-radius: 3px 0 0 3px; background: #1570e0; display: grid; place-items: center; }
.drawer::before { content: ""; border: 3px solid transparent; border-right-color: #fff; border-left: 0; }

/* data grids */
.grid-box { overflow: hidden; min-height: 0; background: #fff; }
.grid { width: 100%; height: 100%; table-layout: fixed; border-collapse: separate; border-spacing: 0; }
.grid th { height: 16px; padding: 0; font-weight: normal; background: var(--head); border: solid var(--line); border-width: 1px 1px 1px 0; white-space: nowrap; overflow: hidden; }
.grid th.start { text-align: left; padding-left: 3px; }
.th { display: flex; align-items: center; justify-content: center; gap: 6px; padding-right: 1px; }
.th svg { width: 8px; height: 8px; margin-left: auto; }
.th::before { content: ""; margin-right: auto; }
.grid td { height: 16px; padding: 0 3px; white-space: nowrap; overflow: hidden; border: solid #ececee; border-width: 0 1px 1px 0; }
.grid .num { text-align: right; padding-right: 2px; }
.grid .sel td { height: 17px; background: #fef1c9; }
.grid .new td { background: #feffe0; padding-left: 2px; }
.entry .sel td:first-child { padding-left: 4px; }
.grid .filler td { height: auto; background: repeating-linear-gradient(#fff 0 15px, #ececee 15px 16px, #fff 16px 32px, #ececee 32px 33px); }
.grid td.ro, .grid .filler td.ro { background: #f0f0f0; border-color: #f0f0f0; }
.grid tfoot td { height: 17px; background: #f0f0f0; border: solid #e0e0e0; border-width: 1px 0 0; }
.grid td.date { padding-left: 17px; }
.green { color: #1f9a1f; }
.eq b { display: block; width: 6px; height: 2px; background: #777; margin-left: 1px; }

.hscroll { height: 14px; flex: none; display: flex; background: #f0f0f0; }
.hscroll button { width: 13px; background: var(--head); display: grid; place-items: center; }
.hscroll .right { margin-left: auto; }
.hscroll button::before { content: ""; border: 3px solid transparent; }
.hscroll .left::before { border-right: 4px solid #000; border-left: 0; }
.hscroll .right::before { border-left: 4px solid #000; border-right: 0; }

.statusbar { height: 17px; display: flex; align-items: center; gap: 3px; padding: 0 10px 0 3px; background: #cdd7fa; border-top: 1px solid var(--line); white-space: nowrap; }
.statusbar .db { margin-left: 8px; }
.statusbar .company { margin-left: auto; }

/* voucher window */
.dialog { position: absolute; left: 169px; right: 169px; top: 15px; bottom: 0; display: flex; flex-direction: column; background: var(--bg); border: solid #7184bd; border-width: 0 1px; }
.titlebar { height: 22px; display: flex; align-items: center; gap: 4px; padding: 0 3px; background: var(--navy); color: #fff; }
.titlebar > svg { width: 9px; height: 9px; }
.titlebar h1 { font: 9px/12px var(--ui); white-space: nowrap; }
.winctl { margin-left: auto; display: flex; gap: 6px; }
.winctl svg { width: 10px; height: 10px; }
.toolbar { height: 35px; display: flex; gap: 11px; padding: 3px 5px 0; background: var(--head); font: 9px/12px var(--ui); }
.tool { display: flex; flex-direction: column; align-items: center; gap: 4px; white-space: nowrap; align-self: flex-start; }
.tool svg { width: 13px; height: 13px; }
.tool:disabled { color: #8d92a6; }
.flip { transform: scaleX(-1); }
.sep { width: 1px; height: 18px; margin: 5px -3px 0 -5px; background: #6f9bdc; }
.sep.tight { margin: 5px -3px 0 -6px; }
.low { margin: 14px -2px 0 -7px; }
.dim { opacity: .6; }

.dialog-body { flex: 1; min-height: 0; display: flex; flex-direction: column; padding: 6px 6px 0; }
.voucher-title { font: bold 12px/18px var(--ui); color: #111; }
.groups { display: flex; align-items: stretch; gap: 6px; margin-top: 5px; }
fieldset { margin: 0; min-width: 0; padding: 7px 5px 5px 6px; border: 1px solid var(--line); display: grid; gap: 2px 4px; align-items: center; }
legend { font-weight: bold; padding: 0 2px; margin-left: -3px; line-height: 12px; color: #111; }
.general { flex: 1; grid-template-columns: 60px 1fr; }
.voucher { width: 156px; grid-template-columns: 60px 1fr; }
.dialog input, .dialog select { width: 100%; height: 16px; border: 1px solid var(--line); border-radius: 0; background-color: #fff; padding: 0 3px; font: 8px/12px var(--sans); color: #1b1b24; outline: 0; }
.dialog select { appearance: none; background-image: var(--arrow); background-repeat: no-repeat; background-position: right 4px center; }
.dialog #term { width: 66px; }
.lookup { justify-self: end; width: 18px; height: 17px; border: 1px solid var(--line); background: var(--head); display: grid; place-items: center; }
.lookup svg { width: 13px; height: 13px; }
.collapse { align-self: center; width: 38px; height: 6px; margin-top: 4px; border: 1px solid var(--line); display: grid; place-items: center; }
.collapse::before { content: ""; border: 2px solid transparent; border-bottom-color: #333; border-top: 0; }
.tab-row { height: 20px; display: flex; justify-content: space-between; align-items: flex-end; }
.tabs { display: flex; gap: 1px; }
.tabs button { height: 14px; padding: 0 9px; border: 1px solid var(--line); border-bottom: 0; }
.tabs .on { background: var(--orange); font-weight: bold; }
.currency { display: flex; align-items: center; gap: 5px; padding-bottom: 3px; white-space: nowrap; }
.dialog #cur { width: 44px; margin-left: 5px; }
.dialog #rate { width: 78px; text-align: right; background: #eee; padding-right: 1px; }
.entry { flex: 1; border: solid var(--line); border-width: 0 1px; }
.entry td:first-child, .entry th:first-child { border-right-color: #9a9ca6; }
.entry tfoot td { border-right: 1px solid #e2e2e2; }
.c1 { width: 157px; } .c2 { width: 71px; } .c3 { width: 66px; } .c5 { width: 113px; } .c6 { width: 79px; } .c8 { width: 78px; }
.wide .thumb { width: 34%; background: var(--head); }

/* taskbar */
.taskbar { height: 30px; flex: none; display: flex; justify-content: space-between; background: linear-gradient(90deg, #1c1c1f, #26262b 18%, #3a3b48 38%, #3a3f50 62%, #34353e 84%, #222226); color: #fff; }
.apps { width: 551px; display: grid; grid-template-columns: repeat(15, 1fr); }
.apps button { display: grid; place-items: center; position: relative; margin: 0 3px; }
.apps svg { width: 20px; height: 20px; }
.apps .open { border-bottom: 2px solid #76b9ed; padding-top: 2px; }
.apps .active { background: #5b5d69; }
.bubble { width: 18px; height: 18px; border-radius: 9px; background: #fff; color: #1668e0; font: bold 8px/17px var(--sans); overflow: hidden; }
.count { position: absolute; right: 0; bottom: 2px; width: 13px; height: 13px; border-radius: 50%; background: #ec1c24; font: 8px/13px var(--ui); }
.tray { display: flex; align-items: center; gap: 6px; padding-right: 13px; font: 9px/13px var(--ui); }
.tray svg { width: 12px; height: 12px; }
.lang { margin-left: 2px; }
.clock { text-align: center; margin: 0 6px 0 2px; white-space: nowrap; }
.notice { position: relative; margin-left: 2px; width: 16px; }
.notice b { position: absolute; left: 7px; top: 4px; width: 11px; height: 11px; border: 1px solid #999; border-radius: 50%; background: #333; font: 8px/9px var(--ui); text-align: center; }
```
